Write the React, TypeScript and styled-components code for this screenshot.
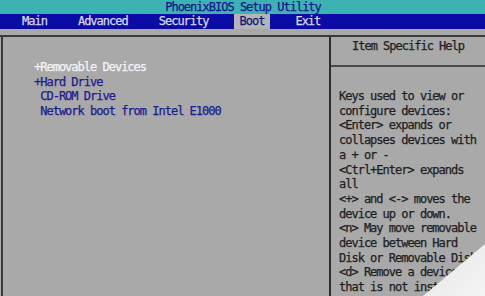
import React from 'react';
import styled, { createGlobalStyle } from 'styled-components';

const GlobalStyle = createGlobalStyle`
  html, body {
    margin: 0;
    padding: 0;
    background: #a9a9a9;
  }
`;

const menuItems = ['Main', 'Advanced', 'Security', 'Boot', 'Exit'];
const activeMenu = 'Boot';

const bootItems = [
  { label: 'Removable Devices', prefix: '+', selected: true },
  { label: 'Hard Drive', prefix: '+', selected: false },
  { label: 'CD-ROM Drive', prefix: ' ', selected: false },
  { label: 'Network boot from Intel E1000', prefix: ' ', selected: false },
];

const helpLines = [
  'Keys used to view or',
  'configure devices:',
  '<Enter> expands or',
  'collapses devices with',
  'a + or -',
  '<Ctrl+Enter> expands',
  'all',
  '<+> and <-> moves the',
  'device up or down.',
  '<n> May move removable',
  'device between Hard',
  'Disk or Removable Disk',
  '<d> Remove a device',
  'that is not installed.',
];

export default function App() {
  return (
    <>
      <GlobalStyle />
      <Screen>
        <TitleBar>PhoenixBIOS Setup Utility</TitleBar>
        <MenuBar>
          {menuItems.map((item) => (
            <MenuItem key={item} $active={item === activeMenu}>
              {item}
            </MenuItem>
          ))}
        </MenuBar>
        <Spacer />
        <Body>
          <LeftPanel>
            {bootItems.map((item) => (
              <BootItem key={item.label} $selected={item.selected}>
                {item.prefix + item.label}
              </BootItem>
            ))}
          </LeftPanel>
          <RightPanel>
            <HelpHeader>Item Specific Help</HelpHeader>
            <HelpText>
              {helpLines.map((line, i) => (
                <HelpLine key={i}>{line}</HelpLine>
              ))}
            </HelpText>
          </RightPanel>
        </Body>
        <Watermark />
      </Screen>
    </>
  );
}

const Screen = styled.div`
  position: relative;
  width: 485px;
  height: 296px;
  overflow: hidden;
  display: flex;
  flex-direction: column;
  background: #a9a9a9;
  font-family: 'DejaVu Sans Mono', 'Liberation Mono', monospace;
  font-size: 12px;
  letter-spacing: -1px;
  line-height: 14.7px;
  -webkit-text-stroke: 0.25px currentColor;
`;

const TitleBar = styled.div`
  height: 14px;
  line-height: 14px;
  background: #3db2b3;
  color: #16168a;
  text-align: center;
  padding-left: 1px;
`;

const MenuBar = styled.div`
  height: 15px;
  display: flex;
  gap: 19px;
  padding-left: 16px;
  background: #0b0ba6;
`;

const MenuItem = styled.div<{ $active: boolean }>`
  padding: 0 6px;
  line-height: 15px;
  color: ${(p) => (p.$active ? '#14147e' : '#d8d8f0')};
  background: ${(p) => (p.$active ? '#b4b4b4' : 'transparent')};
`;

const Spacer = styled.div`
  height: 6px;
  background: #a9a9a9;
`;

const Body = styled.div`
  flex: 1;
  display: flex;
  border-top: 2px solid #3a3a3a;
`;

const LeftPanel = styled.div`
  flex: 1;
  border-left: 2px solid #3a3a3a;
  margin-left: 1px;
  padding: 23px 0 0 31px;
`;

const BootItem = styled.div<{ $selected: boolean }>`
  white-space: pre;
  color: ${(p) => (p.$selected ? '#f4f4f4' : '#1c1c8c')};
`;

const RightPanel = styled.div`
  width: 154px;
  display: flex;
  flex-direction: column;
  border-left: 2px solid #2e2e2e;
`;

const HelpHeader = styled.div`
  height: 26px;
  padding-top: 2px;
  text-align: center;
  color: #1e1e1e;
  border-bottom: 2px solid #4a4a4a;
`;

const HelpText = styled.div`
  padding: 22px 0 0 8px;
  color: #1e1e1e;
`;

const HelpLine = styled.div`
  white-space: pre;
`;

const Watermark = styled.div`
  position: absolute;
  right: 0;
  bottom: 0;
  width: 62px;
  height: 52px;
  clip-path: polygon(100% 0, 100% 100%, 0 100%);
  background: linear-gradient(315deg, #f4f4f4 0%, #ececec 60%, rgba(230, 230, 230, 0.85) 100%);
`;
